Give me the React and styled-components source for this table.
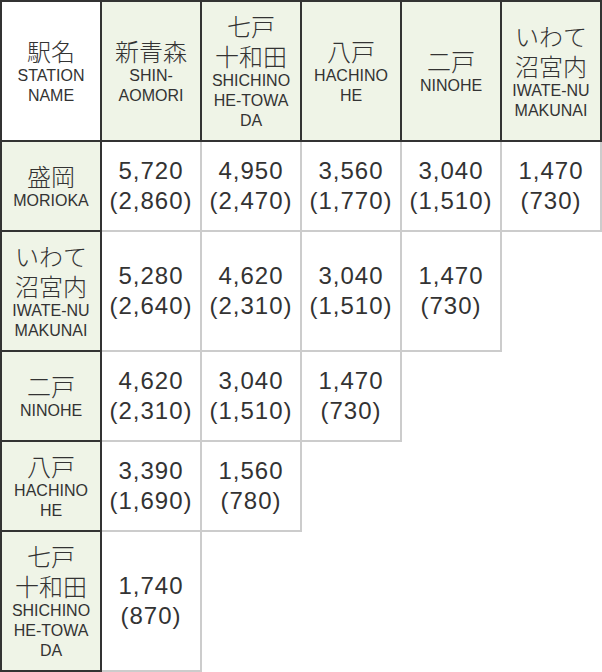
import React from "react"
import styled, { createGlobalStyle } from "styled-components"

const GlobalStyle = createGlobalStyle`
	html,
	body {
		margin: 0;
		padding: 0;
		background: #ffffff;
	}
	body {
		font-family: "Liberation Sans", "Noto Sans CJK JP", sans-serif;
		color: #333333;
	}
`

const FareTable = styled.table`
	border-collapse: collapse;
	table-layout: fixed;
	width: 602px;
`

// collapsed borders add half their width to each side, hence 98px / 9px / 14px
const HeadCell = styled.th`
	width: 98px;
	padding: 9px 0;
	border: 2px solid #333333;
	background: ${(props) => (props.corner ? "#ffffff" : "#eff4e7")};
	font-weight: normal;
	text-align: center;
	vertical-align: middle;
	white-space: nowrap;
`

const FareCell = styled.td`
	padding: 14px 0;
	border: 2px solid #cccccc;
	text-align: center;
	vertical-align: middle;
	white-space: nowrap;
	font-size: 24px;
	line-height: 30px;
	letter-spacing: 1px;
`

const EmptyCell = styled.td`
	border: none;
	padding: 0;
`

const NameJa = styled.div`
	font-size: 24px;
	line-height: 30px;
	font-weight: 300;
	font-family: "Noto Sans CJK JP", sans-serif;
`

const NameEn = styled.div`
	font-size: 16px;
	line-height: 20px;
`

const stations = [
	{ ja: ["新青森"], en: ["SHIN-", "AOMORI"] },
	{ ja: ["七戸", "十和田"], en: ["SHICHINO", "HE-TOWA", "DA"] },
	{ ja: ["八戸"], en: ["HACHINO", "HE"] },
	{ ja: ["二戸"], en: ["NINOHE"] },
	{ ja: ["いわて", "沼宮内"], en: ["IWATE-NU", "MAKUNAI"] },
]

const rows = [
	{
		ja: ["盛岡"],
		en: ["MORIOKA"],
		fares: [
			["5,720", "2,860"],
			["4,950", "2,470"],
			["3,560", "1,770"],
			["3,040", "1,510"],
			["1,470", "730"],
		],
	},
	{
		ja: ["いわて", "沼宮内"],
		en: ["IWATE-NU", "MAKUNAI"],
		fares: [
			["5,280", "2,640"],
			["4,620", "2,310"],
			["3,040", "1,510"],
			["1,470", "730"],
		],
	},
	{
		ja: ["二戸"],
		en: ["NINOHE"],
		fares: [
			["4,620", "2,310"],
			["3,040", "1,510"],
			["1,470", "730"],
		],
	},
	{
		ja: ["八戸"],
		en: ["HACHINO", "HE"],
		fares: [
			["3,390", "1,690"],
			["1,560", "780"],
		],
	},
	{
		ja: ["七戸", "十和田"],
		en: ["SHICHINO", "HE-TOWA", "DA"],
		fares: [["1,740", "870"]],
	},
]

const StationName = ({ ja, en }) => (
	<>
		<NameJa>
			{ja.map((line) => (
				<div key={line}>{line}</div>
			))}
		</NameJa>
		<NameEn>
			{en.map((line) => (
				<div key={line}>{line}</div>
			))}
		</NameEn>
	</>
)

export const App = () => {
	return (
		<>
			<GlobalStyle />
			<FareTable>
				<thead>
					<tr>
						<HeadCell corner>
							<StationName ja={["駅名"]} en={["STATION", "NAME"]} />
						</HeadCell>
						{stations.map((station) => (
							<HeadCell key={station.ja.join("")}>
								<StationName ja={station.ja} en={station.en} />
							</HeadCell>
						))}
					</tr>
				</thead>
				<tbody>
					{rows.map((row) => (
						<tr key={row.ja.join("")}>
							<HeadCell>
								<StationName ja={row.ja} en={row.en} />
							</HeadCell>
							{stations.map((station, i) =>
								row.fares[i] ? (
									<FareCell key={i}>
										{row.fares[i][0]}
										<br />({row.fares[i][1]})
									</FareCell>
								) : (
									<EmptyCell key={i} />
								)
							)}
						</tr>
					))}
				</tbody>
			</FareTable>
		</>
	)
}

export default App
